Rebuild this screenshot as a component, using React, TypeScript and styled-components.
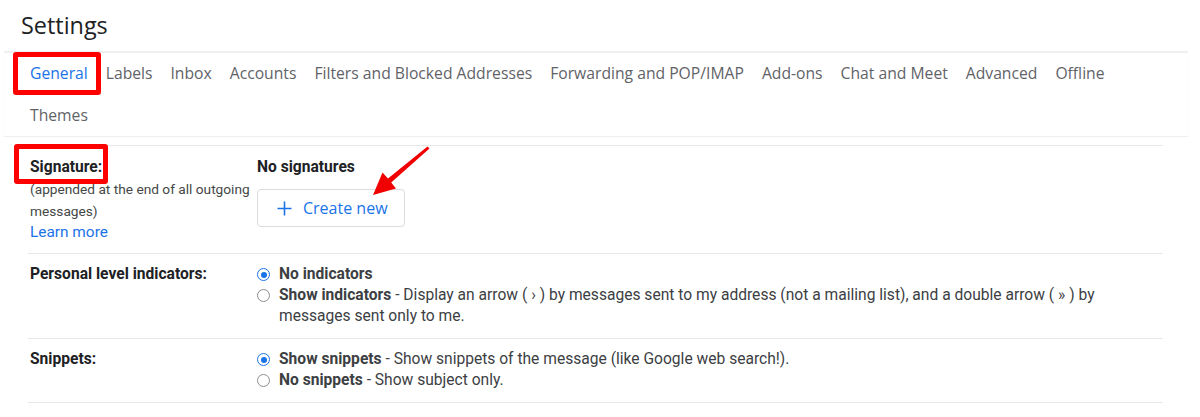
import React from "react";
import styled, { createGlobalStyle, css } from "styled-components";

const Global = createGlobalStyle`
  html, body { margin: 0; padding: 0; background: #fff; }
  body { font-family: Roboto, "Liberation Sans", Arial, sans-serif; color: #202124; }
`;

const Page = styled.div`
  width: 1200px;
  height: 417px;
  overflow: hidden;
  background: #fff;
`;

const Title = styled.h1`
  margin: 0;
  height: 51px;
  box-sizing: border-box;
  padding: 11px 0 0 21px;
  font-family: "Open Sans", Roboto, sans-serif;
  font-weight: 400;
  font-size: 23.4px;
  line-height: 28px;
  color: #202124;
`;

const TabBar = styled.nav`
  margin: 0 12px 0 4px;
  padding: 0 48px 0 17px;
  border-top: 1px solid #eceef1;
  box-shadow: inset 0 1px 1px rgba(60, 64, 67, 0.08);
  border-bottom: 1px solid #eceef1;
  display: flex;
  flex-wrap: wrap;
  height: 84px;
  box-sizing: content-box;
`;

const Tab = styled.div<{ $active?: boolean; $marked?: boolean }>`
  position: relative;
  height: 42px;
  padding: 0 9px;
  display: flex;
  align-items: center;
  font-family: "Open Sans", Roboto, sans-serif;
  font-size: 15.7px;
  color: ${(p) => (p.$active ? "#1a73e8" : "#5f6368")};
  white-space: nowrap;
  ${(p) =>
    p.$marked &&
    css`
      &::after {
        content: "";
        position: absolute;
        left: -8px;
        right: -4px;
        top: 0px;
        bottom: -1px;
        border: 5px solid #ff0000;
        border-radius: 3px;
      }
    `}
`;

const Sections = styled.div`
  margin: 8px 37px 0 28px;
`;

const Row = styled.section<{ $padTop?: number }>`
  position: relative;
  display: grid;
  grid-template-columns: 227px 1fr;
  border-top: 1px solid #e8e8e8;
  padding: ${(p) => p.$padTop ?? 10}px 2px 11px;
  font-size: 15.6px;
  line-height: 21px;
  &:last-child {
    border-bottom: 1px solid #e8e8e8;
  }
`;

const LabelCol = styled.div`
  display: flex;
  flex-direction: column;
`;

const Label = styled.span<{ $marked?: boolean }>`
  position: relative;
  align-self: flex-start;
  font-weight: 700;
  color: #202124;
  ${(p) =>
    p.$marked &&
    css`
      &::after {
        content: "";
        position: absolute;
        left: -16px;
        top: -13px;
        width: 94px;
        height: 40px;
        box-sizing: border-box;
        border: 5px solid #ff0000;
        border-radius: 3px;
      }
    `}
`;

const Note = styled.span`
  font-size: 13.7px;
  line-height: 22px;
  color: #444746;
`;

const LearnMore = styled.a`
  color: #1a73e8;
  font-size: 15.4px;
  line-height: 20px;
  text-decoration: none;
`;

const ContentCol = styled.div`
  position: relative;
  display: flex;
  flex-direction: column;
  align-items: flex-start;
`;

const Strong = styled.span`
  font-weight: 700;
`;

const CreateButton = styled.button`
  margin-top: 11px;
  height: 38px;
  width: 148px;
  box-sizing: border-box;
  border: 1px solid #dadce0;
  border-radius: 4px;
  background: #fff;
  display: flex;
  align-items: center;
  gap: 11px;
  padding: 0 0 0 19px;
  font-family: "Open Sans", Roboto, sans-serif;
  font-size: 16px;
  color: #1a73e8;
  cursor: pointer;
`;

const Arrow = styled.svg`
  position: absolute;
  left: 109px;
  top: -16px;
  overflow: visible;
`;

const Option = styled.div`
  display: grid;
  grid-template-columns: 22px 1fr;
  align-items: start;
`;

const Radio = styled.span<{ $checked?: boolean }>`
  margin-top: 4px;
  width: 13px;
  height: 13px;
  box-sizing: border-box;
  border-radius: 50%;
  border: 1.5px solid ${(p) => (p.$checked ? "#1a73e8" : "#8a8e92")};
  display: flex;
  align-items: center;
  justify-content: center;
  &::after {
    content: "";
    width: 6px;
    height: 6px;
    border-radius: 50%;
    background: ${(p) => (p.$checked ? "#1a73e8" : "transparent")};
  }
`;

const OptionText = styled.span`
  color: #3c4043;
  max-width: 840px;
`;

const tabs = [
  "General",
  "Labels",
  "Inbox",
  "Accounts",
  "Filters and Blocked Addresses",
  "Forwarding and POP/IMAP",
  "Add-ons",
  "Chat and Meet",
  "Advanced",
  "Offline",
  "Themes",
];

export default function App() {
  return (
    <Page>
      <Global />
      <Title>Settings</Title>
      <TabBar>
        {tabs.map((t, i) => (
          <Tab key={t} $active={i === 0} $marked={i === 0}>
            {t}
          </Tab>
        ))}
      </TabBar>
      <Sections>
        <Row $padTop={11}>
          <LabelCol>
            <Label $marked>Signature:</Label>
            <Note>(appended at the end of all outgoing</Note>
            <Note>messages)</Note>
            <LearnMore href="#">Learn more</LearnMore>
          </LabelCol>
          <ContentCol>
            <Strong>No signatures</Strong>
            <CreateButton>
              <svg width="15" height="15" viewBox="0 0 15 15">
                <path d="M7.5 0.5v14M0.5 7.5h14" stroke="#1a73e8" strokeWidth="1.6" fill="none" />
              </svg>
              Create new
            </CreateButton>
            <Arrow width="66" height="58" viewBox="0 0 66 58">
              <polygon
                points="61.5,5.5 63.5,7.5 25.2,41.4 30,47.5 7,54 16.5,31.5 22,37.6"
                fill="#f00000"
              />
            </Arrow>
          </ContentCol>
        </Row>
        <Row>
          <LabelCol>
            <Label>Personal level indicators:</Label>
          </LabelCol>
          <ContentCol>
            <Option>
              <Radio $checked />
              <OptionText>
                <Strong>No indicators</Strong>
              </OptionText>
            </Option>
            <Option>
              <Radio />
              <OptionText>
                <Strong>Show indicators</Strong> - Display an arrow ( › ) by messages sent to my address (not a
                mailing list), and a double arrow ( » ) by messages sent only to me.
              </OptionText>
            </Option>
          </ContentCol>
        </Row>
        <Row>
          <LabelCol>
            <Label>Snippets:</Label>
          </LabelCol>
          <ContentCol>
            <Option>
              <Radio $checked />
              <OptionText>
                <Strong>Show snippets</Strong> - Show snippets of the message (like Google web search!).
              </OptionText>
            </Option>
            <Option>
              <Radio />
              <OptionText>
                <Strong>No snippets</Strong> - Show subject only.
              </OptionText>
            </Option>
          </ContentCol>
        </Row>
      </Sections>
    </Page>
  );
}
